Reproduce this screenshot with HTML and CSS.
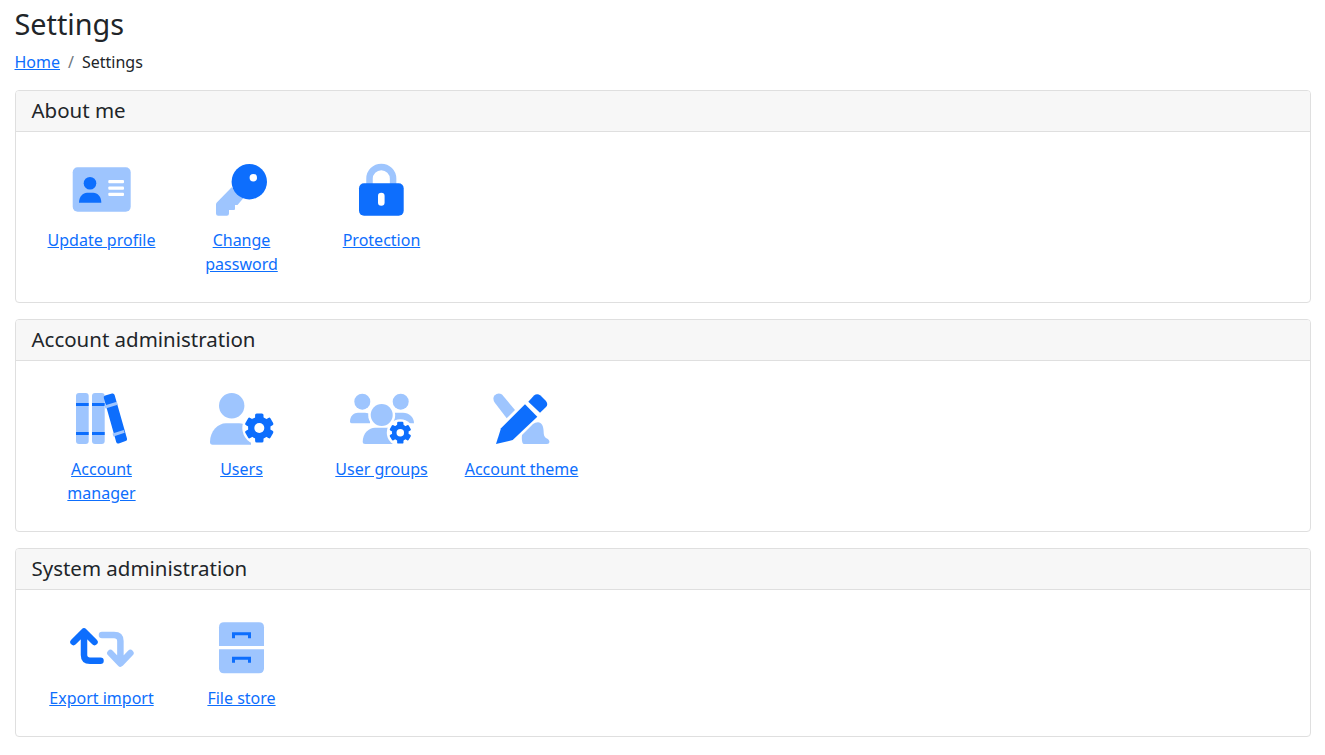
FILE: index.html
```html
<!DOCTYPE html>
<html lang="en">
<head>
  <meta charset="UTF-8">
  <meta name="viewport" content="width=device-width, initial-scale=1.0">
  <title>Settings</title>
  <link rel="stylesheet" href="styles.css">
</head>
<body>
  <svg class="defs" width="0" height="0">
    <symbol id="gear" viewBox="-16 -16 32 32">
      <g class="main">
        <rect x="-4.2" y="-14.5" width="8.4" height="9" rx="1.6"/>
        <rect x="-4.2" y="-14.5" width="8.4" height="9" rx="1.6" transform="rotate(60)"/>
        <rect x="-4.2" y="-14.5" width="8.4" height="9" rx="1.6" transform="rotate(120)"/>
        <rect x="-4.2" y="-14.5" width="8.4" height="9" rx="1.6" transform="rotate(180)"/>
        <rect x="-4.2" y="-14.5" width="8.4" height="9" rx="1.6" transform="rotate(240)"/>
        <rect x="-4.2" y="-14.5" width="8.4" height="9" rx="1.6" transform="rotate(300)"/>
        <circle r="11.2"/>
      </g>
      <circle class="hole" r="5"/>
    </symbol>
  </svg>

  <div class="container">
    <h1>Settings</h1>
    <nav class="breadcrumb">
      <a href="#">Home</a>
      <span class="sep">/</span>
      <span>Settings</span>
    </nav>

    <section class="card">
      <h2 class="card-header">About me</h2>
      <div class="card-body">
        <a class="item" href="#">
          <svg class="icon" viewBox="1 0 80 52">
            <rect class="light" x="11.7" y="3.3" width="58" height="44.4" rx="5"/>
            <circle class="main" cx="29" cy="19.3" r="6.3"/>
            <path class="main" d="M18 38.7 C18 32.5 22 28.7 26 28.7 H32.3 C36.5 28.7 40.3 32.5 40.3 38.7 Z"/>
            <rect class="hole" x="47.3" y="16" width="15.7" height="3.3" rx="1"/>
            <rect class="hole" x="47.3" y="22.4" width="15.7" height="3.3" rx="1"/>
            <rect class="hole" x="47.3" y="28.7" width="15.7" height="3.3" rx="1"/>
          </svg>
          <span>Update profile</span>
        </a>
        <a class="item" href="#">
          <svg class="icon" viewBox="1 0 80 52">
            <path class="light" d="M30.7 23.3 L15.8 38.5 Q15 39.3 15 40.5 V49.5 Q15 51.7 17.2 51.7 H25.8 Q28 51.7 28 49.5 V46 H33 Q34 46 34 45 V41 H36.5 L42.3 34.3 Z"/>
            <circle class="main" cx="48.3" cy="17.7" r="17.7"/>
            <circle class="hole" cx="52.3" cy="13.7" r="3.7"/>
          </svg>
          <span>Change password</span>
        </a>
        <a class="item" href="#">
          <svg class="icon" viewBox="1 0 80 52">
            <path class="light-line" d="M28.5 21 V14.7 a11.8 11.8 0 0 1 23.6 0 V21"/>
            <rect class="main" x="18" y="19.3" width="44.7" height="32.4" rx="5"/>
            <rect class="hole" x="37" y="28.7" width="6.6" height="13" rx="3.3"/>
          </svg>
          <span>Protection</span>
        </a>
      </div>
    </section>

    <section class="card">
      <h2 class="card-header">Account administration</h2>
      <div class="card-body">
        <a class="item" href="#">
          <svg class="icon" viewBox="1 0 80 52">
            <rect class="light" x="15" y="0" width="12.7" height="51" rx="3"/>
            <rect class="light" x="31" y="0" width="12.7" height="51" rx="3"/>
            <rect class="main" x="15" y="10" width="12.7" height="3"/>
            <rect class="main" x="15" y="39" width="12.7" height="3"/>
            <rect class="main" x="31" y="10" width="12.7" height="3"/>
            <rect class="main" x="31" y="39" width="12.7" height="3"/>
            <path class="main" d="M44.2 2.6 L51 .6 Q53 0 53.6 2 L66 45.5 Q66.6 47.5 64.6 48.1 L57.8 50.4 Q55.8 51 55.2 49 L42.8 5 Q42.2 3.2 44.2 2.6 Z"/>
            <path class="band" d="M44 14 L56.3 10.3 M52 42 L63.2 38.3"/>
          </svg>
          <span>Account manager</span>
        </a>
        <a class="item" href="#">
          <svg class="icon" viewBox="1 0 80 52">
            <circle class="light" cx="30.7" cy="12.7" r="12.7"/>
            <path class="light" d="M9 49 C9 38 17 30.3 25 30.3 H36 C42 30.3 47 32 50 36 V51.7 H11.5 Q9 51.7 9 49 Z"/>
            <circle class="hole" cx="58.3" cy="35" r="17"/>
            <use href="#gear" x="42.3" y="19" width="32" height="32"/>
          </svg>
          <span>Users</span>
        </a>
        <a class="item" href="#">
          <svg class="icon" viewBox="1 0 80 52">
            <circle class="light" cx="21.3" cy="8.7" r="8"/>
            <path class="light" d="M9 28.5 C9 23 13 19.7 17 19.7 H24 C26 19.7 28.3 20.5 29 22 V30.3 H10.5 Q9 30.3 9 28.5 Z"/>
            <circle class="light" cx="59.7" cy="8.7" r="8"/>
            <path class="light" d="M52 20 C53 19.8 54 19.7 55 19.7 H62 C68 19.7 73 24 73 30.3 H52 Z"/>
            <circle class="hole" cx="40.7" cy="22" r="13.5"/>
            <circle class="light" cx="40.7" cy="22" r="11"/>
            <path class="light" d="M21.7 49 C21.7 40 28 34.7 34 34.7 H47 C49 34.7 52 36 52 38 V51 H24 Q21.7 51 21.7 49 Z"/>
            <circle class="hole" cx="59.3" cy="39.7" r="13.5"/>
            <use href="#gear" x="47.3" y="27.7" width="24" height="24"/>
          </svg>
          <span>User groups</span>
        </a>
        <a class="item" href="#">
          <svg class="icon" viewBox="1 0 80 52">
            <path class="light" d="M14 10 Q11 6 13.5 2.5 Q17 -1 21 1.5 L34 17 L25.7 25.3 Z"/>
            <path class="light" d="M41 42 L52 31 Q54 29.3 57 29.3 C60.5 29.3 62.5 33 62.6 38 C62.8 42 63 44 66 45.5 C69.5 47.5 69 51 66 51 H43 C41 51 40.5 46 41 42 Z"/>
            <path class="main" d="M15 51 L20 35.3 L44 11.3 L56.3 23.7 L31.7 47 Z"/>
            <path class="main" d="M47.3 8.7 L53 2.5 Q56 0 59.5 2.5 L65 8 Q67.5 11.5 65 14 L59 19.8 Z"/>
          </svg>
          <span>Account theme</span>
        </a>
      </div>
    </section>

    <section class="card">
      <h2 class="card-header">System administration</h2>
      <div class="card-body">
        <a class="item" href="#">
          <svg class="icon" viewBox="1 0 80 52">
            <path class="main-line" d="M23 11 V33 Q23 38.7 29 38.7 H39.5 M12.5 20 L23 9.5 L33.5 20"/>
            <path class="light-line round" d="M41 13 H53 Q59.4 13 59.4 19 V40 M49.4 31 L59.4 41.5 L69.4 31"/>
          </svg>
          <span>Export import</span>
        </a>
        <a class="item" href="#">
          <svg class="icon" viewBox="1 0 80 52">
            <path class="light" d="M18 24 V5.3 Q18 .3 23 .3 H58 Q63 .3 63 5.3 V24 Z"/>
            <path class="light" d="M18 27.3 H63 V46.3 Q63 51.3 58 51.3 H23 Q18 51.3 18 46.3 Z"/>
            <path class="main" d="M31 10.3 H50 V16.3 H47 V13.3 H34 V16.3 H31 Z"/>
            <path class="main" d="M31 34.7 H50 V40.7 H47 V37.7 H34 V40.7 H31 Z"/>
          </svg>
          <span>File store</span>
        </a>
      </div>
    </section>
  </div>
</body>
</html>
```

FILE: styles.css
```css
* {
  box-sizing: border-box;
}
body {
  font-family: "Noto Sans", sans-serif;
  font-size: 16px;
  line-height: 24px;
  color: #212529;
  margin: 0;
  background: #fff;
}
a {
  color: #0d6efd;
}
.defs {
  position: absolute;
}
.container {
  padding: 6px 14.5px 16px;
}
h1 {
  font-size: 28.8px;
  font-weight: 400;
  line-height: 35px;
  margin: 0 0 9px;
}
.breadcrumb {
  display: flex;
  margin-bottom: 16px;
}
.sep {
  color: #6c757d;
  padding: 0 8px;
}
.card {
  border: 1px solid #dfdfdf;
  border-radius: 4px;
  margin-bottom: 16px;
}
.card-header {
  background: #f7f7f7;
  border-bottom: 1px solid #dfdfdf;
  border-radius: 3px 3px 0 0;
  font-size: 20.48px;
  font-weight: 400;
  line-height: 24px;
  margin: 0;
  padding: 7px 16px 9px;
}
.card-body {
  display: flex;
  padding: 32px 16px 26px;
}
.item {
  width: 140px;
  padding: 0 10px;
  text-align: center;
}
.item span {
  display: block;
}
.icon {
  display: block;
  width: 80px;
  height: 52px;
  margin: 0 auto 12px;
  overflow: visible;
}
.main {
  fill: #0d6efd;
}
.light {
  fill: #9ec5fe;
}
.hole {
  fill: #fff;
}
.band {
  fill: none;
  stroke: #9ec5fe;
  stroke-width: 3;
}
.main-line,
.light-line {
  fill: none;
  stroke-width: 6.5;
}
.main-line {
  stroke: #0d6efd;
  stroke-linecap: round;
  stroke-linejoin: round;
}
.light-line {
  stroke: #9ec5fe;
}
.light-line.round {
  stroke-linecap: round;
  stroke-linejoin: round;
}
```
